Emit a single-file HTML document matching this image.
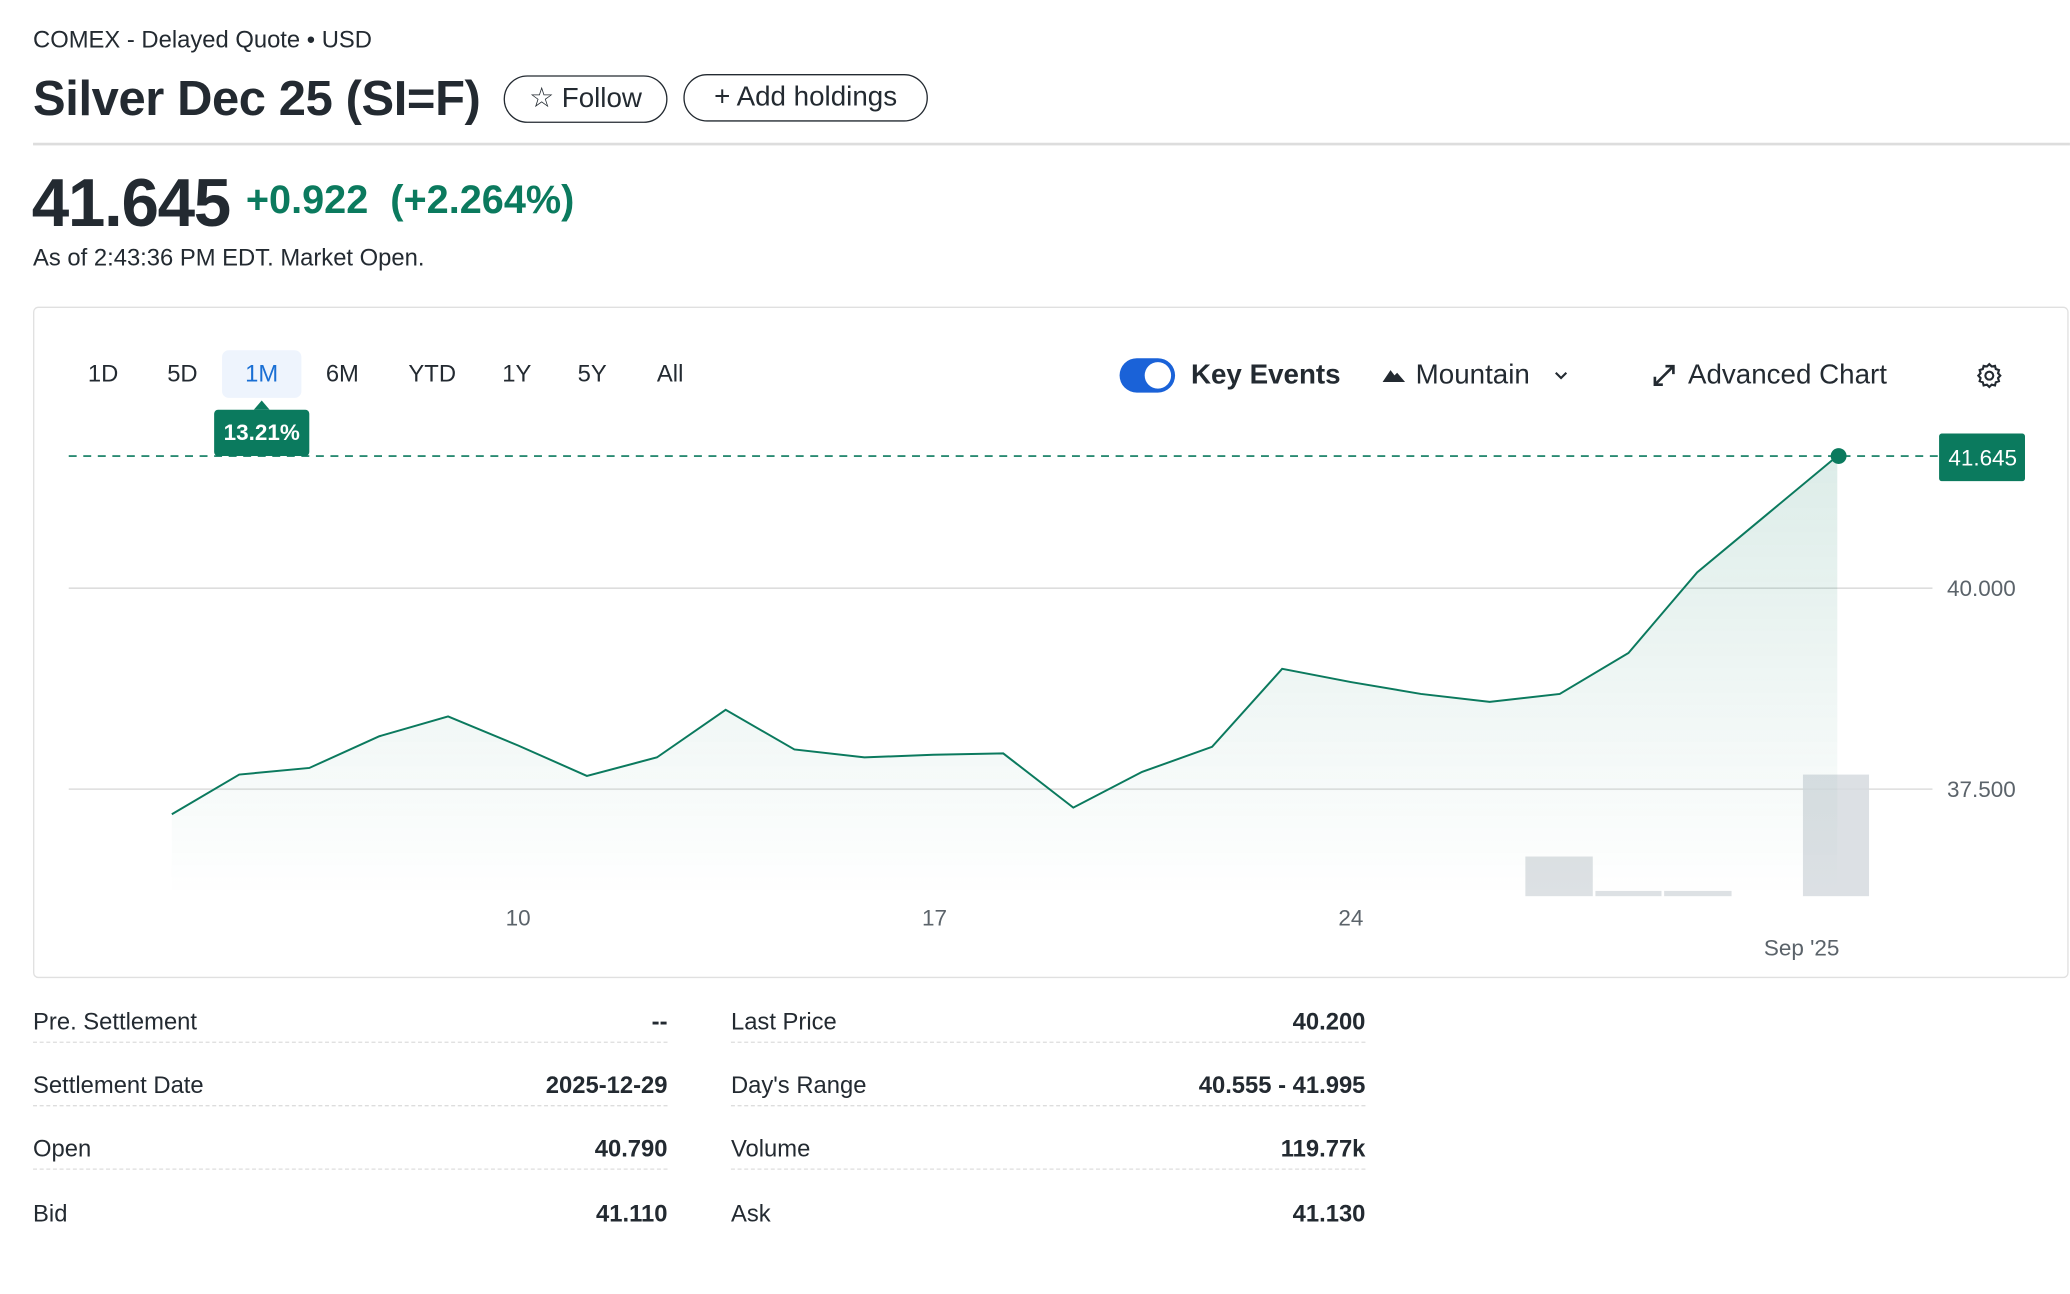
<!DOCTYPE html>
<html><head><meta charset="utf-8">
<style>
html,body{margin:0;padding:0;background:#fff;width:2070px;height:1294px;overflow:hidden}
#w{position:absolute;left:0;top:0;width:1566px;height:979px;transform:scale(1.3218);transform-origin:0 0;font-family:"Liberation Sans",sans-serif;color:#232a31}
.a{position:absolute;white-space:nowrap}
.btn{position:absolute;border:1.5px solid #232a31;border-radius:19px;box-sizing:border-box;height:36px;font-size:21px;line-height:33px;text-align:center}
.r{position:absolute;font-size:18px;transform:translate(-50%,-50%)}
.row{position:absolute;width:480px;height:48px;font-size:18px;border-bottom:1.5px dashed #ddd;box-sizing:border-box}
.row span{position:absolute;top:22px}
.row b{position:absolute;right:0;top:22px;font-weight:600}
.xl{position:absolute;font-size:17px;color:#5b636a;transform:translateX(-50%)}
</style></head><body><div id="w">
<div class="a" style="left:25px;top:20px;font-size:18px">COMEX - Delayed Quote • USD</div>
<div class="a" style="left:25px;top:54px;font-size:37px;font-weight:700;letter-spacing:-0.3px">Silver Dec 25 (SI=F)</div>
<div class="btn" style="left:381px;top:57px;width:124px">☆ Follow</div>
<div class="btn" style="left:517px;top:56px;width:185px">+ Add holdings</div>
<div class="a" style="left:25px;top:108px;width:1541px;height:1.5px;background:#ddd"></div>
<div class="a" style="left:24px;top:124px;font-size:51px;font-weight:700;letter-spacing:-1px">41.645</div>
<div class="a" style="left:186px;top:135px;font-size:30px;font-weight:700;color:#0b7a5e">+0.922 &nbsp;(+2.264%)</div>
<div class="a" style="left:25px;top:185px;font-size:18px">As of 2:43:36 PM EDT. Market Open.</div>

<div class="a" style="left:25px;top:232px;width:1540px;height:508px;border:1.5px solid #e0e0e0;border-radius:4px;box-sizing:border-box"></div>
<div class="a" style="left:168px;top:265px;width:60px;height:36px;background:#eef4fd;border-radius:5px"></div>
<div class="r" style="left:78px;top:283px">1D</div>
<div class="r" style="left:138px;top:283px">5D</div>
<div class="r" style="left:198px;top:283px;color:#1a6fd4">1M</div>
<div class="r" style="left:259px;top:283px">6M</div>
<div class="r" style="left:327px;top:283px">YTD</div>
<div class="r" style="left:391px;top:283px">1Y</div>
<div class="r" style="left:448px;top:283px">5Y</div>
<div class="r" style="left:507px;top:283px">All</div>
<div class="a" style="left:162px;top:310px;width:72px;height:35px;background:#0b7a5e;border-radius:3px;color:#fff;font-weight:700;font-size:17px;line-height:35px;text-align:center">13.21%</div>
<div class="a" style="left:192px;top:303px;width:0;height:0;border-left:6px solid transparent;border-right:6px solid transparent;border-bottom:7px solid #0b7a5e"></div>

<div class="a" style="left:847px;top:271px;width:42px;height:26px;background:#1a62d8;border-radius:13px"></div>
<div class="a" style="left:866px;top:274px;width:20px;height:20px;background:#fff;border-radius:50%"></div>
<div class="a" style="left:901px;top:272px;font-size:21px;font-weight:700">Key Events</div>
<svg class="a" style="left:1045px;top:277px" width="20" height="14"><path d="M1 12 L7 3 L10 7 L12 5 L18 12Z" fill="#232a31"/></svg>
<div class="a" style="left:1071px;top:272px;font-size:21px">Mountain</div>
<svg class="a" style="left:1175px;top:279px" width="12" height="10"><path d="M2 3 L6 7 L10 3" stroke="#232a31" stroke-width="1.6" fill="none"/></svg>
<svg class="a" style="left:1249px;top:274px" width="20" height="20"><path d="M3 17 L17 3 M11 3 H17 V9 M3 11 V17 H9" stroke="#232a31" stroke-width="2" fill="none"/></svg>
<div class="a" style="left:1277px;top:272px;font-size:21px">Advanced Chart</div>
<svg class="a" style="left:1495px;top:274px" width="20" height="20" viewBox="0 0 20 20"><path d="M10 1.5 L11.8 3.3 L14.3 2.8 L14.9 5.2 L17.3 6 L16.6 8.4 L18.3 10.2 L16.6 12 L17.3 14.4 L14.9 15.2 L14.3 17.6 L11.8 17 L10 18.8 L8.2 17 L5.7 17.6 L5.1 15.2 L2.7 14.4 L3.4 12 L1.7 10.2 L3.4 8.4 L2.7 6 L5.1 5.2 L5.7 2.8 L8.2 3.3Z" stroke="#232a31" stroke-width="1.6" fill="none"/><circle cx="10" cy="10.2" r="3" stroke="#232a31" stroke-width="1.6" fill="none"/></svg>

<svg class="a" style="left:0;top:0" width="1566" height="760">
<defs><linearGradient id="g" gradientUnits="userSpaceOnUse" x1="0" y1="345" x2="0" y2="678"><stop offset="0" stop-color="#0b7a5e" stop-opacity="0.14"/><stop offset="1" stop-color="#0b7a5e" stop-opacity="0"/></linearGradient></defs>
<line x1="52" y1="445" x2="1462" y2="445" stroke="#ddd" stroke-width="1.2"/>
<line x1="52" y1="597" x2="1462" y2="597" stroke="#ddd" stroke-width="1.2"/>
<rect x="1154" y="648" width="51" height="30" fill="#dde1e4"/>
<rect x="1207" y="674" width="50" height="4" fill="#dde1e4"/>
<rect x="1259" y="674" width="51" height="4" fill="#dde1e4"/>
<rect x="1364" y="586" width="50" height="92" fill="#d6dbdf" opacity="0.85"/>
<path d="M130 616 L181 586 L234 581 L287 557 L339 542 L392 564 L444 587 L497 573 L549 537 L601 567 L654 573 L706 571 L759 570 L812 611 L864 584 L917 565 L970 506 L1022 516 L1075 525 L1127 531 L1180 525 L1232 494 L1284 433 L1337 389 L1390 345 L1390 678 L130 678Z" fill="url(#g)"/>
<path d="M130 616 L181 586 L234 581 L287 557 L339 542 L392 564 L444 587 L497 573 L549 537 L601 567 L654 573 L706 571 L759 570 L812 611 L864 584 L917 565 L970 506 L1022 516 L1075 525 L1127 531 L1180 525 L1232 494 L1284 433 L1337 389 L1390 345" fill="none" stroke="#0b7a5e" stroke-width="1.5"/>
<line x1="52" y1="345" x2="1467" y2="345" stroke="#0b7a5e" stroke-width="1.2" stroke-dasharray="6 5"/>
<circle cx="1391" cy="345" r="6" fill="#0b7a5e"/>
<rect x="1467" y="328" width="65" height="36" rx="2" fill="#0b7a5e"/>
<text x="1500" y="352" font-size="17" fill="#fff" text-anchor="middle" font-family="Liberation Sans, sans-serif">41.645</text>
<text x="1473" y="451" font-size="17" fill="#5b636a" font-family="Liberation Sans, sans-serif">40.000</text>
<text x="1473" y="603" font-size="17" fill="#5b636a" font-family="Liberation Sans, sans-serif">37.500</text>
</svg>
<div class="xl" style="left:392px;top:685px">10</div>
<div class="xl" style="left:707px;top:685px">17</div>
<div class="xl" style="left:1022px;top:685px">24</div>
<div class="xl" style="left:1363px;top:708px">Sep '25</div>

<div class="row" style="left:25px;top:741px"><span>Pre. Settlement</span><b>--</b></div>
<div class="row" style="left:25px;top:789px"><span>Settlement Date</span><b>2025-12-29</b></div>
<div class="row" style="left:25px;top:837px"><span>Open</span><b>40.790</b></div>
<div class="row" style="left:25px;top:886px;border:none"><span>Bid</span><b>41.110</b></div>
<div class="row" style="left:553px;top:741px"><span>Last Price</span><b>40.200</b></div>
<div class="row" style="left:553px;top:789px"><span>Day's Range</span><b>40.555 - 41.995</b></div>
<div class="row" style="left:553px;top:837px"><span>Volume</span><b>119.77k</b></div>
<div class="row" style="left:553px;top:886px;border:none"><span>Ask</span><b>41.130</b></div>
</div></body></html>
